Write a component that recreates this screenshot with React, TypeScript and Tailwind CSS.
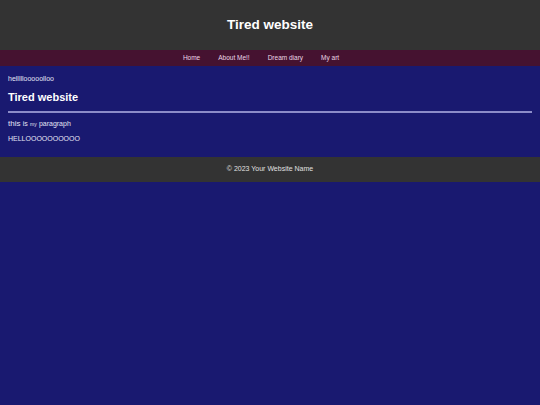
import React from 'react';

const links = ['Home', 'About Me!!', 'Dream diary', 'My art'];

const App: React.FC = () => {
    return (
        <div className="min-h-screen bg-[#191970] font-['Liberation_Sans',Arial,sans-serif] text-white">
            <header className="bg-[#333333] h-[50px] flex items-center justify-center">
                <h1 className="text-[13.5px] font-bold">Tired website</h1>
            </header>

            <nav className="bg-[#451230] h-[16px] flex items-center justify-center text-[6.5px] text-[#ecd6e6]">
                {links.map((l) => (
                    <a key={l} href="#" className="mr-[18px]">{l}</a>
                ))}
            </nav>

            <main className="px-[8px] pt-[9px] pb-[15px] leading-none text-[#e4e4f4]">
                <p className="text-[7px]">helllllooooolloo</p>
                <h2 className="text-[11px] font-bold mt-[10px] text-white">Tired website</h2>
                <hr className="mt-[8px] border-0 h-[2px] bg-[#8c8cc8]" />
                <p className="mt-[7px] text-[8px]">
                    this <span className="text-[7px]">is</span> <span className="text-[5px]">my</span>{' '}
                    <span className="text-[7px]">paragraph</span>
                </p>
                <p className="mt-[7px] text-[7px]">HELLOOOOOOOOOO</p>
            </main>

            <footer className="bg-[#333333] h-[25px] flex items-center justify-center text-[7px] text-[#e0e0e0]">
                © 2023 Your Website Name
            </footer>
        </div>
    );
};

export default App;
